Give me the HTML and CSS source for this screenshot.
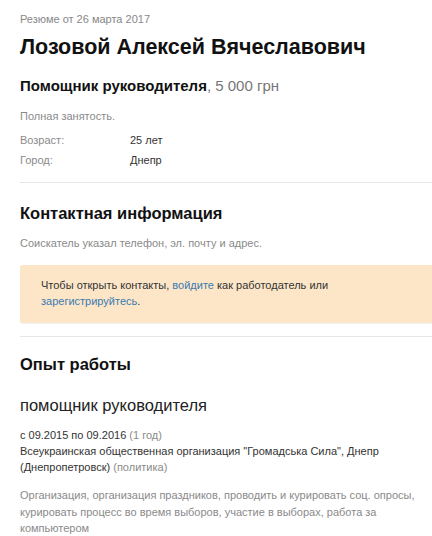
FILE: index.html
```html
<!DOCTYPE html>
<html lang="ru">
<head>
<meta charset="utf-8">
<link rel="stylesheet" href="styles.css">
</head>
<body>
<div class="page">
  <div class="date">Резюме от 26 марта 2017</div>
  <h1 class="name">Лозовой Алексей Вячеславович</h1>
  <div class="position"><b>Помощник руководителя</b><span class="salary">, 5 000 грн</span></div>
  <div class="muted employment">Полная занятость.</div>
  <div class="facts">
    <div class="muted">Возраст:</div><div class="val">25 лет</div>
    <div class="muted">Город:</div><div class="val">Днепр</div>
  </div>
  <hr class="divider">
  <h2 class="section">Контактная информация</h2>
  <div class="muted contact-note">Соискатель указал телефон, эл. почту и адрес.</div>
  <div class="notice">Чтобы открыть контакты, <a href="#">войдите</a> как работодатель или<br><a href="#">зарегистрируйтесь</a>.</div>
  <hr class="divider divider2">
  <h2 class="section section2">Опыт работы</h2>
  <div class="job-title">помощник руководителя</div>
  <div class="job-meta">
    <div>с 09.2015 по 09.2016 <span class="muted">(1 год)</span></div>
    <div>Всеукраинская общественная организация "Громадська Сила", Днепр<br>(Днепропетровск) <span class="muted">(политика)</span></div>
  </div>
  <div class="muted job-desc">Организация, организация праздников, проводить и курировать соц. опросы, курировать процесс во время выборов, участие в выборах, работа за компьютером</div>
</div>
</body>
</html>
```
FILE: styles.css
```css
html, body { margin: 0; padding: 0; background: #fff; }
body { font-family: "Liberation Sans", Arial, sans-serif; color: #222; }
.page { padding: 12px 0 0 20px; overflow: hidden; }
.date { font-size: 11px; color: #888; line-height: 14px; }
.name { font-size: 21.5px; font-weight: 700; color: #111; margin: 8px 0 0; line-height: 26px; }
.position { font-size: 15px; margin-top: 16px; line-height: 20px; color: #111; }
.salary { color: #777; }
.muted { color: #8a8a8a; }
.employment { font-size: 11px; margin-top: 13px; line-height: 14px; }
.facts { display: grid; grid-template-columns: 110px auto; row-gap: 6px; font-size: 11px; line-height: 14px; margin-top: 10px; }
.val { color: #333; }
.divider { border: 0; border-top: 1px solid #e6e6e6; margin: 15px 0 0; }
.section { font-size: 16.5px; font-weight: 700; color: #111; margin: 20px 0 0; line-height: 20px; }
.contact-note { font-size: 11px; line-height: 14px; margin-top: 13px; }
.notice { background: #fde6c8; border-radius: 3px 0 0 3px; margin-top: 15px; padding: 12px 20px 14px 21px; font-size: 11px; line-height: 16px; color: #333; box-shadow: 0 1px 1px rgba(0,0,0,0.06); }
.notice a { color: #3a7ab0; text-decoration: none; }
.divider2 { margin-top: 13px; }
.section2 { margin-top: 17px; }
.job-title { font-size: 16.5px; margin-top: 21px; line-height: 20px; color: #222; }
.job-meta { font-size: 11px; line-height: 16px; margin-top: 12px; color: #333; }
.job-desc { font-size: 11px; line-height: 16.5px; margin-top: 12px; padding-right: 8px; }
```
